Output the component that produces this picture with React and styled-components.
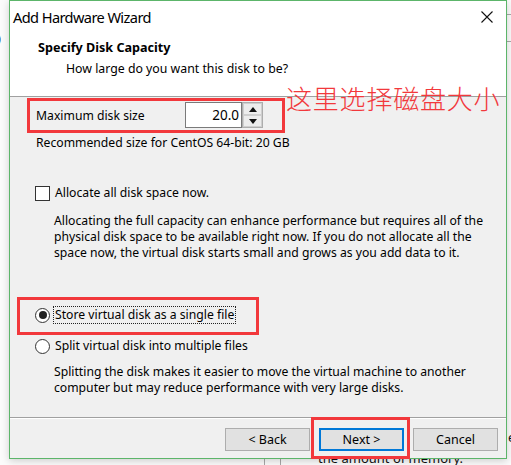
import React from "react";
import styled, { createGlobalStyle } from "styled-components";

const Global = createGlobalStyle`
  html, body { margin: 0; padding: 0; }
  body {
    width: 511px; height: 465px; overflow: hidden; background: #ffffff;
    font-family: "Noto Sans", "Open Sans", sans-serif; color: #000;
  }
  #root { width: 511px; height: 465px; }
`;

const Desktop = styled.div`
  position: relative;
  width: 511px;
  height: 465px;
  background: #fbfbfb;
  overflow: hidden;
`;

const BehindText = styled.div`
  position: absolute;
  left: ${p => p.$x}px;
  top: ${p => p.$y}px;
  font-size: 13px;
  color: #111;
  white-space: nowrap;
`;

const BehindLine = styled.div`
  position: absolute;
  left: ${p => p.$x}px;
  top: ${p => p.$y}px;
  width: ${p => p.$w}px;
  height: ${p => p.$h}px;
  background: #a8a8a8;
`;

const Window = styled.div`
  position: absolute;
  left: 9px;
  top: 0;
  width: 498px;
  height: 459px;
  box-sizing: border-box;
  border: 1px solid #5cb56a;
  background: #f0f0f0;
  display: flex;
  flex-direction: column;
  box-shadow: 0 2px 8px rgba(0, 0, 0, 0.18);
`;

const Header = styled.div`
  background: #fff;
  height: 95px;
  border-bottom: 1px solid #a0a0a0;
  display: flex;
  flex-direction: column;
`;

const TitleBar = styled.div`
  height: 31px;
  display: flex;
  align-items: center;
  justify-content: space-between;
  padding-left: 3px;
`;

const Title = styled.div`
  font-size: 14.6px;
  letter-spacing: -0.6px;
`;

const Close = styled.div`
  width: 38px;
  height: 31px;
  display: flex;
  align-items: center;
  justify-content: center;
`;

const Heading = styled.div`
  margin-top: 8px;
  padding-left: 28px;
  font-size: 12.6px;
  font-weight: 700;
  line-height: 16px;
`;

const SubHeading = styled.div`
  margin-top: 5px;
  padding-left: 56px;
  font-size: 12.3px;
  line-height: 16px;
`;

const Body = styled.div`
  flex: 1;
  padding-left: 26px;
  display: flex;
  flex-direction: column;
  font-size: 12.2px;
  line-height: 16px;
`;

const SizeRow = styled.div`
  margin-top: 5px;
  display: flex;
  align-items: center;
  height: 26px;
`;

const Label = styled.div`
  width: 149px;
  padding-top: 1px;
`;

const NumberBox = styled.div`
  display: flex;
  height: 26px;
`;

const NumberInput = styled.div`
  width: 57px;
  box-sizing: border-box;
  border: 1px solid #7a7a7a;
  background: #fff;
  text-align: right;
  padding-right: 2px;
  font-size: 13.5px;
  line-height: 24px;
`;

const Spinner = styled.div`
  width: 21px;
  display: flex;
  flex-direction: column;
  box-sizing: border-box;
  border: 1px solid #adadad;
  background: #e5e5e5;
`;

const SpinBtn = styled.div`
  flex: 1;
  display: flex;
  align-items: center;
  justify-content: center;
  border: 1px solid #cfcfcf;
  background: #ececec;
`;

const Text = styled.div`
  margin-top: ${p => p.$mt || 0}px;
  margin-left: ${p => p.$ml || 0}px;
`;

const OptionRow = styled.div`
  margin-top: ${p => p.$mt}px;
  display: flex;
  align-items: center;
  height: 16px;
`;

const CheckBox = styled.div`
  width: 15px;
  height: 15px;
  box-sizing: border-box;
  border: 1px solid #333;
  background: #fff;
  margin-left: -1px;
  margin-right: 4px;
`;

const Radio = styled.div`
  width: 15px;
  height: 15px;
  box-sizing: border-box;
  border: 1px solid #333;
  border-radius: 50%;
  background: #fff;
  margin-left: -1px;
  margin-right: 4px;
  display: flex;
  align-items: center;
  justify-content: center;
  &::after {
    content: "";
    display: ${p => (p.$checked ? "block" : "none")};
    width: 8px;
    height: 8px;
    border-radius: 50%;
    background: #222;
  }
`;

const OptionLabel = styled.div`
  padding: 0 1px;
  outline: ${p => (p.$focus ? "1px dotted #222" : "none")};
`;

const Footer = styled.div`
  height: 41px;
  border-top: 1px solid #a0a0a0;
  box-shadow: inset 0 1px 0 #fff;
  display: flex;
  justify-content: flex-end;
  align-items: flex-start;
  gap: 9px;
  padding: 10px 8px 0 0;
  box-sizing: border-box;
`;

const Button = styled.div`
  width: 85px;
  height: 23px;
  box-sizing: border-box;
  border: ${p => (p.$default ? "2px solid #0078d7" : "1px solid #adadad")};
  background: #e1e1e1;
  font-size: 12.5px;
  display: flex;
  align-items: center;
  justify-content: center;
`;

const Mark = styled.div`
  position: absolute;
  left: ${p => p.$x}px;
  top: ${p => p.$y}px;
  width: ${p => p.$w}px;
  height: ${p => p.$h}px;
  box-sizing: border-box;
  border: 3px solid #f2383c;
  pointer-events: none;
`;

const Note = styled.div`
  position: absolute;
  left: 286px;
  top: 81px;
  font-family: "Noto Sans CJK SC", sans-serif;
  font-size: 26px;
  font-weight: 300;
  line-height: 34px;
  color: #f2383c;
  letter-spacing: 0.8px;
  white-space: nowrap;
`;

export default function App() {
  return (
    <Desktop>
      <Global />
      <BehindText $x={-3} $y={29}>)</BehindText>
      <BehindLine $x={507} $y={14} $w={4} $h={1} />
      <BehindLine $x={507} $y={41} $w={4} $h={1} />
      <BehindLine $x={264} $y={455} $w={1} $h={10} />
      <BehindLine $x={280} $y={455} $w={1} $h={10} />
      <BehindText $x={508} $y={428}>e</BehindText>
      <BehindText $x={318} $y={449}>the amount of memory.</BehindText>
      <Window>
        <Header>
          <TitleBar>
            <Title>Add Hardware Wizard</Title>
            <Close>
              <svg width="12" height="12" viewBox="0 0 12 12">
                <path d="M0.5 0.5 L11.5 11.5 M11.5 0.5 L0.5 11.5" stroke="#111" strokeWidth="1.1" />
              </svg>
            </Close>
          </TitleBar>
          <Heading>Specify Disk Capacity</Heading>
          <SubHeading>How large do you want this disk to be?</SubHeading>
        </Header>
        <Body>
          <SizeRow>
            <Label>Maximum disk size</Label>
            <NumberBox>
              <NumberInput>20.0</NumberInput>
              <Spinner>
                <SpinBtn>
                  <svg width="8" height="5" viewBox="0 0 8 5"><path d="M0 5 L4 0 L8 5 Z" fill="#111" /></svg>
                </SpinBtn>
                <SpinBtn>
                  <svg width="8" height="5" viewBox="0 0 8 5"><path d="M0 0 L4 5 L8 0 Z" fill="#111" /></svg>
                </SpinBtn>
              </Spinner>
            </NumberBox>
          </SizeRow>
          <Text $mt={7}>Recommended size for CentOS 64-bit: 20 GB</Text>
          <OptionRow $mt={34}>
            <CheckBox />
            <OptionLabel>Allocate all disk space now.</OptionLabel>
          </OptionRow>
          <Text $mt={12} $ml={18}>
            Allocating the full capacity can enhance performance but requires all of the<br />
            physical disk space to be available right now. If you do not allocate all the<br />
            space now, the virtual disk starts small and grows as you add data to it.
          </Text>
          <OptionRow $mt={46}>
            <Radio $checked />
            <OptionLabel $focus>Store virtual disk as a single file</OptionLabel>
          </OptionRow>
          <OptionRow $mt={15}>
            <Radio />
            <OptionLabel>Split virtual disk into multiple files</OptionLabel>
          </OptionRow>
          <Text $mt={10} $ml={18}>
            Splitting the disk makes it easier to move the virtual machine to another<br />
            computer but may reduce performance with very large disks.
          </Text>
        </Body>
        <Footer>
          <Button>&lt; Back</Button>
          <Button $default>Next &gt;</Button>
          <Button>Cancel</Button>
        </Footer>
      </Window>
      <Mark $x={27} $y={98} $w={258} $h={35} />
      <Mark $x={17} $y={297} $w={242} $h={38} />
      <Mark $x={311} $y={417} $w={99} $h={42} />
      <Note>这里选择磁盘大小</Note>
    </Desktop>
  );
}
